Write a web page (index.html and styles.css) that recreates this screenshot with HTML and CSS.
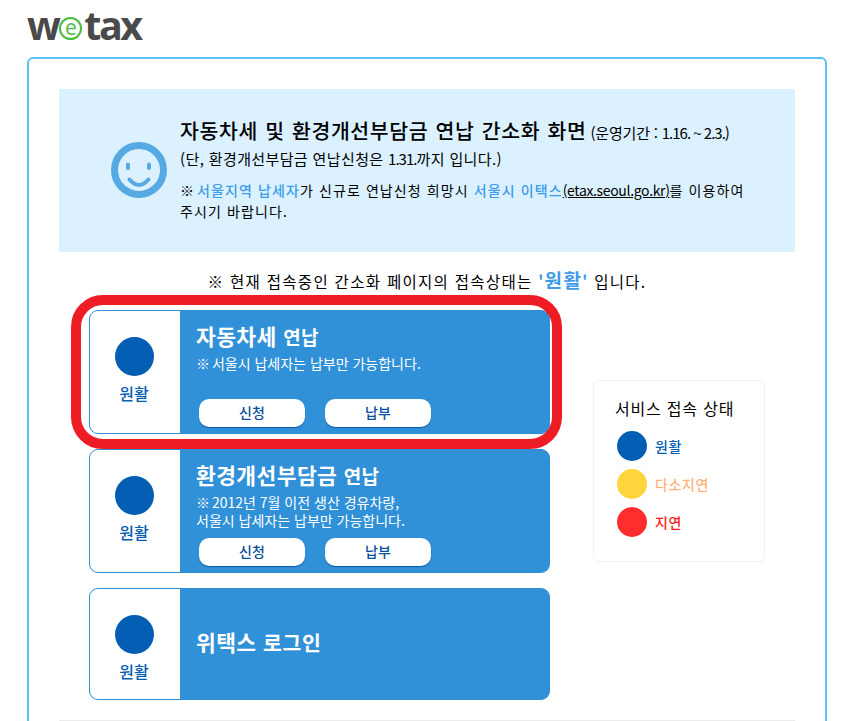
FILE: index.html
```html
<!DOCTYPE html>
<html lang="ko">
<head>
<meta charset="utf-8">
<title>wetax</title>
<link rel="stylesheet" href="styles.css">
</head>
<body>
<header class="logo"><span class="logo-w">w</span><span class="logo-e">e</span><span class="logo-tax">tax</span></header>
<main class="frame">
  <section class="banner">
    <svg class="smile" width="56" height="56" viewBox="0 0 56 56" aria-hidden="true">
      <circle cx="28" cy="28" r="24.5" fill="none" stroke="#56a9e2" stroke-width="7"/>
      <rect x="15" y="20.5" width="4" height="7.5" rx="2" fill="#56a9e2"/>
      <rect x="36" y="20.5" width="4" height="7.5" rx="2" fill="#56a9e2"/>
      <path d="M18.5 37.5 Q28 48.5 37.5 37.5" fill="none" stroke="#56a9e2" stroke-width="4" stroke-linecap="round"/>
    </svg>
    <div class="banner-text">
      <p class="banner-title"><strong>자동차세 및 환경개선부담금 연납 간소화 화면</strong> <span class="period">(운영기간 : <span class="tight">1.16. ~ 2.3.)</span></span></p>
      <p class="banner-sub">(단, 환경개선부담금 연납신청은 <span class="tight">1.31.</span>까지 입니다.)</p>
      <p class="banner-note"><span class="mark">※</span> <b>서울지역 납세자</b>가 신규로 연납신청 희망시 <b>서울시 이택스</b><u class="site">(etax.seoul.go.kr)</u>를 이용하여<br>주시기 바랍니다.</p>
    </div>
  </section>
  <p class="status-line">※ 현재 접속중인 간소화 페이지의 접속상태는 <b>'<span class="status-word">원활</span>'</b> 입니다.</p>
  <div class="content">
    <div class="cards">
      <article class="card">
        <div class="lamp"><i class="dot"></i><span>원활</span></div>
        <div class="body">
          <h2>자동차세 <small>연납</small></h2>
          <p><span class="mark">※</span> 서울시 납세자는 납부만 가능합니다.</p>
          <div class="btns btns-low"><a class="btn">신청</a><a class="btn">납부</a></div>
        </div>
      </article>
      <article class="card">
        <div class="lamp"><i class="dot"></i><span>원활</span></div>
        <div class="body">
          <h2>환경개선부담금 <small>연납</small></h2>
          <p><span class="mark">※</span> 2012년 7월 이전 생산 경유차량,<br>서울시 납세자는 납부만 가능합니다.</p>
          <div class="btns"><a class="btn">신청</a><a class="btn">납부</a></div>
        </div>
      </article>
      <article class="card card-short">
        <div class="lamp"><i class="dot"></i><span>원활</span></div>
        <div class="body body-center">
          <h2>위택스 <small>로그인</small></h2>
        </div>
      </article>
      <div class="highlight"></div>
    </div>
    <aside class="legend">
      <h3>서비스 접속 상태</h3>
      <ul>
        <li class="ok"><i></i>원활</li>
        <li class="slow"><i></i>다소지연</li>
        <li class="late"><i></i>지연</li>
      </ul>
    </aside>
  </div>
  <hr class="rule">
</main>
</body>
</html>
```
FILE: styles.css
```css
* { box-sizing: border-box; }
html, body { margin: 0; height: 721px; overflow: hidden; background: #fff; }
body { font-family: "Noto Sans CJK KR", "Noto Sans", sans-serif; color: #000; }
p, h2, h3, ul { margin: 0; padding: 0; }

.logo {
  height: 57px; padding: 0 0 0 27px;
  display: flex; align-items: flex-start;
  font-family: "Open Sans", sans-serif; font-weight: 700;
  font-size: 39.5px; line-height: 50px; color: #4a4a4a;
}
.logo-w { margin-right: -2.5px; }
.logo-tax { letter-spacing: -2.5px; padding-right: 3px; }
.logo-e {
  width: 23px; height: 23px; margin: 17px 2px 0 1px; border: 2px solid #4dbb3c; border-radius: 50%;
  color: #4dbb3c; font-weight: 400; font-size: 21px; line-height: 17px; text-align: center;
}

.frame {
  width: 800px; height: 700px; margin-left: 27px; padding: 30px;
  border: 2px solid #5cc3fd; border-radius: 6px;
}

.banner {
  height: 163px; background: #dbf1ff; display: flex; align-items: flex-start;
  padding: 25px 40px 0 52px; gap: 13px;
}
.smile { margin-top: 28px; flex: none; }
.banner-text { flex: 1; }
.banner-title { font-size: 15px; line-height: 32px; letter-spacing: -.2px; white-space: nowrap; }
.banner-title strong { font-size: 20.5px; letter-spacing: .6px; word-spacing: 1px; font-weight: 500; }
.banner-sub { font-size: 15px; line-height: 20px; letter-spacing: .38px; }
.tight { letter-spacing: -1px; }
.banner-note { margin-top: 11px; font-size: 14px; line-height: 21px; letter-spacing: 1.1px; }
.banner-note b { color: #3d9be9; font-weight: 500; }
.site { letter-spacing: -.35px; }

.status-line { margin-top: 15px; height: 28px; text-align: center; font-size: 15.5px; line-height: 26px; letter-spacing: 1.3px; }
.status-line b { color: #3d9be9; font-weight: 700; }
.status-word { font-size: 19px; }

.content { display: flex; margin-top: 15px; }
.cards { position: relative; width: 461px; margin-left: 30px; display: flex; flex-direction: column; gap: 15px; }
.card {
  display: flex; height: 124px; border: 1px solid #2f8ed6; border-radius: 9px; overflow: hidden; background: #3090d8;
}
.card-short { height: 112px; }
.lamp {
  width: 90px; flex: none; background: #fff; display: flex; flex-direction: column; align-items: center;
  padding: 26px 2px 0 0; color: #035eb4; font-size: 16px; font-weight: 500; line-height: 22px;
}
.dot { display: block; width: 39px; height: 39px; border-radius: 50%; background: #035eb4; margin-bottom: 6px; }
.body { flex: 1; padding: 9px 0 0 16px; color: #fff; }
.body-center { display: flex; align-items: center; padding-top: 0; padding-bottom: 5px; }
.body h2 { font-size: 21.5px; line-height: 32px; font-weight: 700; letter-spacing: .4px; }
.body h2 small { font-size: 19px; font-weight: 700; letter-spacing: .3px; }
.body-center h2 small { font-size: 20.5px; letter-spacing: .7px; }
.body p { font-size: 14px; line-height: 18px; letter-spacing: 0; margin-top: 1px; }
.mark { letter-spacing: -2px; }
.btns { display: flex; gap: 20px; margin: 9px 0 0 3px; }
.btns-low { margin-top: 27px; }
.btn {
  display: block; width: 106px; height: 28px; background: #fff; border-radius: 10px;
  box-shadow: 0 1px 1px 0 #0b57a8; text-align: center; font-size: 14px; font-weight: 500; line-height: 26px; color: #0a4f9e;
}
.highlight {
  position: absolute; left: -18px; top: -15px; width: 491px; height: 154px;
  border: 10px solid #ee1c25; border-radius: 32px; pointer-events: none;
}

.legend {
  width: 172px; height: 182px; margin: 70px 0 0 43px; padding: 15px 0 0 21px;
  border: 1px solid #eff0f1; border-radius: 6px;
}
.legend h3 { font-size: 16px; font-weight: 400; line-height: 24px; letter-spacing: .8px; }
.legend ul { list-style: none; margin: 11px 0 0 2px; }
.legend li { display: flex; align-items: center; gap: 8px; height: 30px; margin-bottom: 8px; font-size: 14px; font-weight: 500; letter-spacing: .6px; }
.legend i { display: block; width: 30px; height: 30px; border-radius: 50%; }
.ok { color: #035eb4; } .ok i { background: #035eb4; }
.slow { color: #ffb27a; } .slow i { background: #ffd53d; }
.late { color: #ff1a1a; } .late i { background: #ff2e2e; }

.rule { border: 0; border-top: 1px solid #ececec; margin: 20px 0 0; }
```
